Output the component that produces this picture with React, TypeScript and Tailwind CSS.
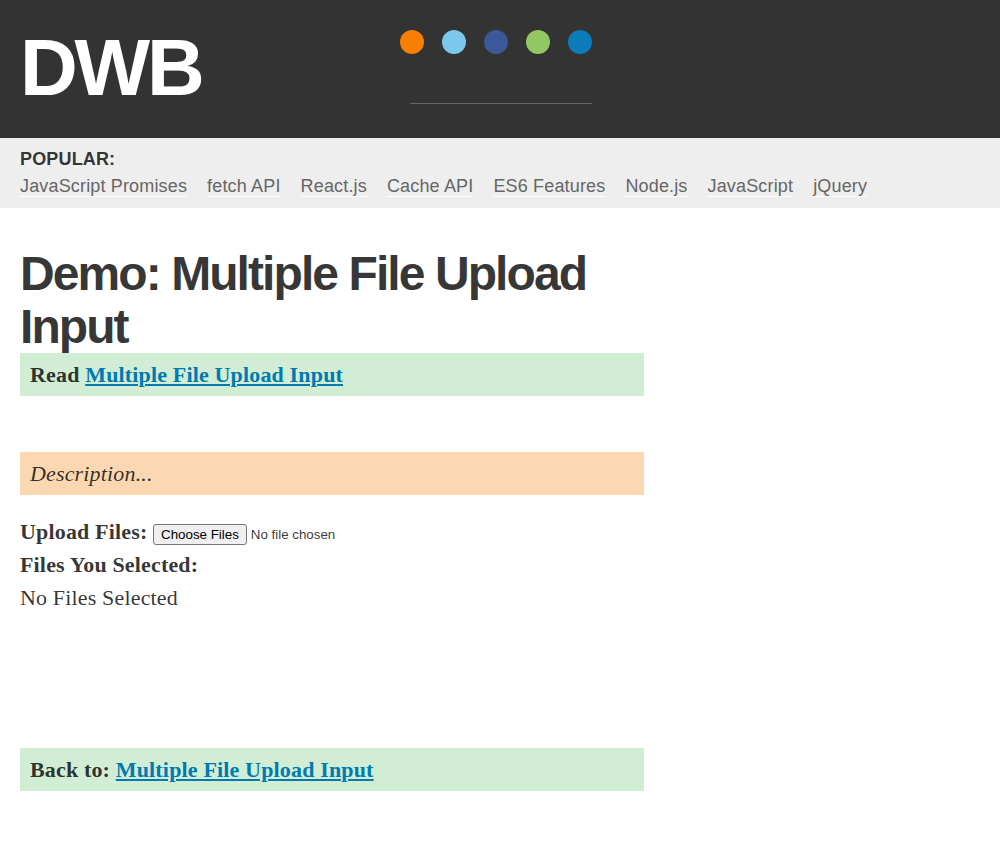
const dots = ['bg-[#f97f00]', 'bg-[#7bc8ec]', 'bg-[#3b5998]', 'bg-[#93c763]', 'bg-[#0b7cb9]'];
const topics = ['JavaScript Promises', 'fetch API', 'React.js', 'Cache API', 'ES6 Features', 'Node.js', 'JavaScript', 'jQuery'];

function ArticleLink() {
  return (
    <a href="#" className="text-[#007ab0] underline">
      Multiple File Upload Input
    </a>
  );
}

export default function App() {
  return (
    <div className="min-h-[841px] bg-white font-['Liberation_Serif',serif] text-[22px] leading-[33px] tracking-[0.16px] text-black/80">
      <header className="flex h-[138px] bg-[#333] font-['Liberation_Sans',sans-serif]">
        <div className="w-[400px] pt-[28px] pl-5 text-[80px] leading-[80px] font-bold tracking-[-3.2px] text-white">DWB</div>
        <div className="w-[192px] pt-[30px]">
          <div className="flex gap-[18px]">
            {dots.map((color) => (
              <a key={color} href="#" className={`size-6 rounded-full ${color}`} />
            ))}
          </div>
          <div className="mt-[49px] ml-[10px] h-px bg-[#666]" />
        </div>
      </header>
      <nav className="h-[70px] bg-[#eee] px-5 pt-[8px] font-['Liberation_Sans',sans-serif] text-[18px] leading-[27px] tracking-[0.16px]">
        <div className="font-bold">POPULAR:</div>
        <div className="flex gap-5 pt-[3px] text-[#666]">
          {topics.map((topic) => (
            <a key={topic} href="#" className="h-[21px] border-b border-white leading-[21px]">
              {topic}
            </a>
          ))}
        </div>
      </nav>
      <main className="w-[664px] px-5 pt-[39px]">
        <h1 className="font-['Liberation_Sans',sans-serif] text-[48px] leading-[53px] font-bold tracking-[-1.92px]">
          Demo: Multiple File Upload Input
        </h1>
        <p className="h-[43px] bg-[#d1edd4] px-[10px] py-[5px] font-bold">
          Read <ArticleLink />
        </p>
        <p className="mt-14 h-[43px] bg-[#fbd7b2] px-[10px] py-[5px] italic">Description...</p>
        <div className="mt-[20px] flex h-[33px] font-bold">
          <label htmlFor="files">Upload Files:</label>
          <input
            id="files"
            type="file"
            multiple
            className="mt-[9px] ml-[5.65px] h-[21px] font-['Liberation_Sans',sans-serif] text-[13.333px] leading-[21px] font-normal tracking-normal file:me-1 file:h-[21px] file:rounded-[3px] file:border file:border-[#767676] file:bg-[#efefef] file:px-[7px] file:leading-[15px] file:text-black"
          />
        </div>
        <p className="font-bold">Files You Selected:</p>
        <p>No Files Selected</p>
        <p className="mt-[134px] h-[43px] bg-[#d1edd4] px-[10px] py-[5px] font-bold">
          Back to: <ArticleLink />
        </p>
      </main>
    </div>
  );
}
